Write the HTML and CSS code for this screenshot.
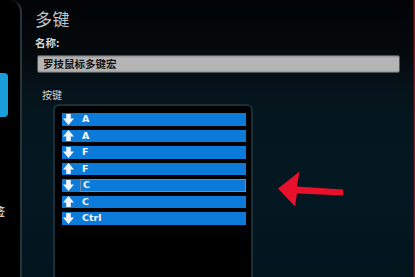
FILE: index.html
```html
<!DOCTYPE html>
<html>
<head>
<meta charset="utf-8">
<link rel="stylesheet" href="styles.css">
</head>
<body>
<div class="side">
  <div class="side-tab"></div>
  <div class="side-label">签</div>
</div>
<div class="main">
  <div class="title">多键</div>
  <div class="label">名称:</div>
  <div class="input">罗技鼠标多键宏</div>
  <div class="keys-label">按键</div>
  <div class="list">
    <div class="item"><svg class="ico" viewBox="0 0 11 11"><path d="M3.2 0h4.6v4.6h3.2L5.5 11 0 4.6h3.2z"/></svg><span class="txt">A</span></div>
    <div class="item"><svg class="ico" viewBox="0 0 11 11"><path d="M3.2 11h4.6V6.4h3.2L5.5 0 0 6.4h3.2z"/></svg><span class="txt">A</span></div>
    <div class="item"><svg class="ico" viewBox="0 0 11 11"><path d="M3.2 0h4.6v4.6h3.2L5.5 11 0 4.6h3.2z"/></svg><span class="txt">F</span></div>
    <div class="item"><svg class="ico" viewBox="0 0 11 11"><path d="M3.2 11h4.6V6.4h3.2L5.5 0 0 6.4h3.2z"/></svg><span class="txt">F</span></div>
    <div class="item sel"><svg class="ico" viewBox="0 0 11 11"><path d="M3.2 0h4.6v4.6h3.2L5.5 11 0 4.6h3.2z"/></svg><span class="txt">C</span></div>
    <div class="item"><svg class="ico" viewBox="0 0 11 11"><path d="M3.2 11h4.6V6.4h3.2L5.5 0 0 6.4h3.2z"/></svg><span class="txt">C</span></div>
    <div class="item"><svg class="ico" viewBox="0 0 11 11"><path d="M3.2 0h4.6v4.6h3.2L5.5 11 0 4.6h3.2z"/></svg><span class="txt">Ctrl</span></div>
  </div>
</div>
<div class="edge"></div>
<svg class="red-arrow" viewBox="0 0 70 40" width="70" height="40"><polygon points="2,18.5 23.5,1.5 21,16.5 67,19.5 67,25.5 21,23.5 19,36.5" fill="#e8102a"/></svg>
</body>
</html>
```
FILE: styles.css
```css
html, body {
  margin: 0;
  padding: 0;
}
body {
  width: 415px;
  height: 277px;
  overflow: hidden;
  display: flex;
  position: relative;
  background: linear-gradient(to bottom, #020406 0%, #04090c 18%, #06131a 32%, #04171f 45%, #031822 70%, #02151d 100%);
  font-family: "Noto Sans CJK SC", "DejaVu Sans", sans-serif;
}
.side {
  width: 20px;
  flex: none;
  background: #000;
  border-right: 2px solid #27343a;
  border-top-right-radius: 12px;
  display: flex;
  flex-direction: column;
  overflow: hidden;
}
.side-tab {
  margin-top: 73px;
  width: 8px;
  height: 44px;
  background: #1a9edb;
  border-radius: 0 4px 4px 0;
}
.side-label {
  margin-top: 87px;
  margin-left: -6px;
  font-size: 11px;
  line-height: 14px;
  color: #c8c8c8;
  font-weight: bold;
}
.main {
  flex: 1;
  display: flex;
  flex-direction: column;
  padding-left: 13px;
  min-width: 0;
}
.title {
  margin-top: 8px;
  font-size: 17px;
  line-height: 22px;
  color: #c4c4c4;
  letter-spacing: 0.5px;
}
.label {
  margin-top: 6px;
  font-size: 10.5px;
  line-height: 13px;
  font-weight: bold;
  color: #d6d6d6;
}
.input {
  margin-top: 6px;
  margin-left: 2px;
  width: 363px;
  height: 18px;
  box-sizing: border-box;
  background: linear-gradient(to bottom, #8e8e8e 0%, #b6b6b6 12%, #b4b4b4 88%, #9a9a9a 100%);
  border: 1px solid #4a5458;
  border-radius: 2px;
  padding-left: 5px;
  font-size: 10.5px;
  line-height: 16px;
  font-weight: bold;
  color: #151515;
}
.keys-label {
  margin-top: 15px;
  margin-left: 7px;
  font-size: 10px;
  line-height: 13px;
  color: #cfd6da;
}
.list {
  margin-top: 3px;
  margin-left: 18px;
  width: 200px;
  flex: 1;
  box-sizing: border-box;
  background: #000;
  border: 2px solid #1a3039;
  border-bottom: none;
  border-radius: 6px 6px 0 0;
  padding: 7px 5px 0 7px;
  display: flex;
  flex-direction: column;
  gap: 4px;
}
.item {
  height: 12.5px;
  background: #0b7ad8;
  display: flex;
  align-items: center;
  flex: none;
}
.ico {
  width: 11px;
  height: 11px;
  margin-left: 1px;
  fill: #f2f6fa;
  flex: none;
}
.txt {
  margin-left: 8px;
  font-family: "DejaVu Sans", sans-serif;
  font-weight: bold;
  font-size: 9.5px;
  line-height: 12px;
  color: #f4f7fa;
}
.sel .txt {
  flex: 1;
  align-self: stretch;
  margin-left: 6px;
  padding-left: 2px;
  border: 1px solid #6d8fae;
  box-sizing: border-box;
  line-height: 10.5px;
}
.edge {
  width: 2px;
  flex: none;
  background: linear-gradient(to right, #0a2438 50%, #8a1722 50%);
}
.red-arrow {
  position: absolute;
  left: 276px;
  top: 170px;
}
```
